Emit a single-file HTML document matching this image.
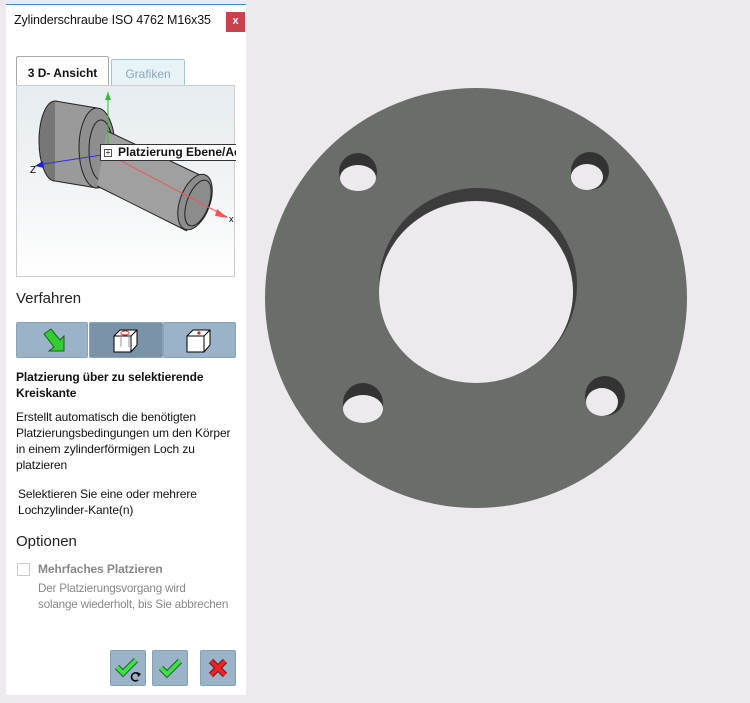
<!DOCTYPE html>
<html><head><meta charset="utf-8"><style>
*{margin:0;padding:0;box-sizing:border-box}
body{width:750px;height:703px;background:#edeaed;font-family:"Liberation Sans",sans-serif;position:relative;overflow:hidden;color:#111}
.panel{position:absolute;left:6px;top:4px;width:240px;height:691px;background:#fff;border-top:1px solid #3b8fd8}
.abs{position:absolute}
.t{font-size:12px;white-space:nowrap;letter-spacing:-0.1px}
.btn{position:absolute;top:317px;height:36px;background:#9ab3c8;border:1px solid #8aa3b8;border-radius:2px}
.ab{position:absolute;top:645px;width:36px;height:36px;background:#9ab3c8;border:1px solid #86a0b6;border-radius:2px}
</style></head><body>
<div class="panel">
 <div class="abs t" style="left:8px;top:8px;font-size:12.5px">Zylinderschraube ISO 4762 M16x35</div>
 <div class="abs" style="left:220px;top:7px;width:19px;height:20px;background:#c8424b;color:#fff;font-size:11px;font-weight:bold;text-align:center;line-height:19px">x</div>
 <div class="abs" style="left:10px;top:51px;width:93px;height:34px;border:1px solid #aaa;border-bottom:none;background:#fff;border-radius:2px 2px 0 0;font-size:12px;font-weight:bold;text-align:center;line-height:32px">3 D- Ansicht</div>
 <div class="abs" style="left:105px;top:54px;width:74px;height:30px;border:1px solid #9fc6d8;border-bottom:none;background:#e8f3f8;border-radius:2px 2px 0 0;font-size:12px;color:#8aa6b8;text-align:center;line-height:28px">Grafiken</div>
 <div class="abs" style="left:10px;top:80px;width:219px;height:192px;border:1px solid #ccc;background:linear-gradient(#e6ecf0,#f3f5f6 60%,#fff)">
  <svg width="219" height="192" style="position:absolute;left:0;top:0">
   <ellipse cx="38" cy="55" rx="16" ry="40" fill="#777" stroke="#222"/>
   <path d="M38 15 L80 22 L80 102 L38 95 Z" fill="#9a9a9a"/>
   <path d="M38 15 L80 22 M38 95 L80 102" stroke="#222"/>
   <ellipse cx="80" cy="62" rx="18" ry="40" fill="#8e8e8e" stroke="#222"/>
   <ellipse cx="84" cy="64" rx="12" ry="30" fill="none" stroke="#222"/>
   <path d="M90 45 L185 90 L170 145 L80 100 Z" fill="#a0a0a0"/>
   <path d="M90 45 L185 90 M170 145 L80 100" stroke="#222"/>
   <ellipse cx="178" cy="116" rx="15" ry="29" fill="#8c8c8c" stroke="#222" transform="rotate(20 178 116)"/>
   <ellipse cx="181" cy="117" rx="11" ry="24" fill="none" stroke="#222" transform="rotate(20 181 117)"/>
   <line x1="91" y1="70" x2="91" y2="6" stroke="#3b3"/>
   <path d="M88 14 L91 6 L94 14Z" fill="#3b3"/>
   <line x1="91" y1="68" x2="20" y2="79" stroke="#33c"/>
   <path d="M26 75 L18 80 L27 82Z" fill="#22c"/>
   <line x1="91" y1="68" x2="210" y2="131" stroke="#e55"/>
   <path d="M200 123 L211 132 L198 130Z" fill="#e55"/>
   <text x="13" y="87" font-size="10" font-family="Liberation Sans">Z</text>
   <text x="212" y="136" font-size="9" font-family="Liberation Sans">x</text>
  </svg>
  <div class="abs" style="left:83px;top:58px;width:136px;height:17px;background:#fff;border:1px solid #333;border-right:none;font-size:12px;font-weight:bold;line-height:15px;padding-left:17px;white-space:nowrap;overflow:hidden">Platzierung Ebene/Ac</div>
  <div class="abs" style="left:87px;top:63px;width:8px;height:8px;border:1px solid #555;font-size:8px;line-height:6px;text-align:center">+</div>
 </div>
 <div class="abs" style="left:10px;top:285px;font-size:15px;color:#222">Verfahren</div>
 <div class="btn" style="left:10px;width:72px">
  <svg width="72" height="36"><path d="M27 11 L34 6 L43 17 L47 13 L47 28 L32 28 L37 24 Z" fill="#3c3" stroke="#161" stroke-width="1"/></svg>
 </div>
 <div class="btn" style="left:83px;width:74px;background:#7a93a8">
  <svg width="74" height="36"><path d="M24 13 L30 7 L47 7 L47 22 L41 29 L24 29 Z" fill="#fff" stroke="#000"/><path d="M24 13 L41 13 L47 7 M41 13 L41 29" fill="none" stroke="#000"/><ellipse cx="35" cy="10" rx="4" ry="2" fill="none" stroke="#e33"/><path d="M31 10 L31 24 M39 10 L39 24" stroke="#999"/></svg>
 </div>
 <div class="btn" style="left:157px;width:73px">
  <svg width="73" height="36"><path d="M23 13 L29 7 L46 7 L46 22 L40 29 L23 29 Z" fill="#fff" stroke="#000"/><path d="M23 13 L40 13 L46 7 M40 13 L40 29" fill="none" stroke="#000"/><circle cx="35" cy="10" r="1.6" fill="#e22"/></svg>
 </div>
 <div class="abs t" style="left:10px;top:364px;font-weight:bold;line-height:16px">Platzierung über zu selektierende<br>Kreiskante</div>
 <div class="abs t" style="left:10px;top:404px;line-height:16px">Erstellt automatisch die benötigten<br>Platzierungsbedingungen um den Körper<br>in einem zylinderförmigen Loch zu<br>platzieren</div>
 <div class="abs t" style="left:12px;top:481px;line-height:16px">Selektieren Sie eine oder mehrere<br>Lochzylinder-Kante(n)</div>
 <div class="abs" style="left:10px;top:528px;font-size:15px;color:#222">Optionen</div>
 <div class="abs" style="left:11px;top:558px;width:13px;height:13px;border:1px solid #ccc"></div>
 <div class="abs t" style="left:32px;top:557px;font-weight:bold;color:#888">Mehrfaches Platzieren</div>
 <div class="abs t" style="left:32px;top:576px;line-height:16px;color:#888;font-size:11.7px;letter-spacing:-0.2px">Der Platzierungsvorgang wird<br>solange wiederholt, bis Sie abbrechen</div>
 <div class="ab" style="left:104px"><svg width="34" height="34"><path d="M6 16 L12 22 L25 9" fill="none" stroke="#163" stroke-width="6"/><path d="M6 16 L12 22 L25 9" fill="none" stroke="#4d4" stroke-width="4"/><path d="M28 24 A4 4 0 1 0 27 29" fill="none" stroke="#000" stroke-width="1.6"/><path d="M26 21 L30 23 L27 26Z" fill="#000"/></svg></div>
 <div class="ab" style="left:146px"><svg width="34" height="34"><path d="M8 17 L14 23 L27 10" fill="none" stroke="#163" stroke-width="6"/><path d="M8 17 L14 23 L27 10" fill="none" stroke="#4d4" stroke-width="4"/></svg></div>
 <div class="ab" style="left:194px"><svg width="34" height="34"><path d="M10 10 L24 24 M24 10 L10 24" stroke="#711" stroke-width="6"/><path d="M10 10 L24 24 M24 10 L10 24" stroke="#e22" stroke-width="4"/></svg></div>
</div>
<svg width="750" height="703" style="position:absolute;left:0;top:0;pointer-events:none">
 <ellipse cx="476" cy="298" rx="211" ry="210" fill="#6b6d6a"/>
 <ellipse cx="478" cy="285" rx="99" ry="97" fill="#3c3c3c"/>
 <ellipse cx="476" cy="292" rx="97" ry="91" fill="#edeaed"/>
 <ellipse cx="358" cy="172" rx="19" ry="19" fill="#333"/><ellipse cx="358" cy="178" rx="18" ry="13" fill="#edeaed"/>
 <ellipse cx="590" cy="171" rx="19" ry="19" fill="#333"/><ellipse cx="587" cy="177" rx="16" ry="13" fill="#edeaed"/>
 <ellipse cx="363" cy="403" rx="20" ry="20" fill="#333"/><ellipse cx="363" cy="409" rx="20" ry="14" fill="#edeaed"/>
 <ellipse cx="605" cy="396" rx="20" ry="20" fill="#333"/><ellipse cx="602" cy="402" rx="16" ry="14" fill="#edeaed"/>
</svg>
</body></html>
